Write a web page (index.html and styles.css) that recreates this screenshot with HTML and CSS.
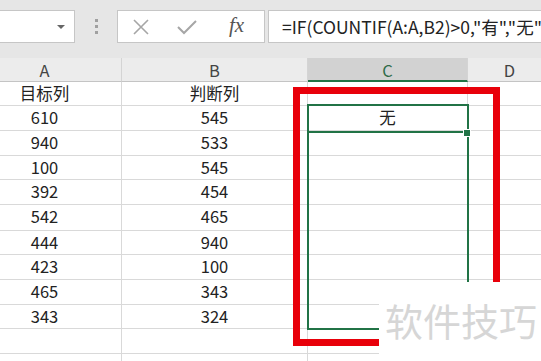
FILE: index.html
```html
<!DOCTYPE html>
<html>

<head>
    <title>COUNTIF</title>
    <link rel="stylesheet" href="styles.css">
</head>

<body>
    <div class="toolbar">
        <div class="name-box">
            <span class="arrow"></span>
        </div>
        <div class="grip">
            <span></span><span></span><span></span>
        </div>
        <div class="fx-box">
            <svg class="icon" width="18" height="18" viewBox="0 0 18 18">
                <path d="M2 2 L16 16 M16 2 L2 16" stroke="#a6a6a6" stroke-width="1.6" fill="none" />
            </svg>
            <svg class="icon" width="22" height="18" viewBox="0 0 22 18">
                <path d="M2 9 L8 15 L20 3" stroke="#a6a6a6" stroke-width="2" fill="none" />
            </svg>
            <span class="fx">fx</span>
        </div>
        <div class="formula">=IF(COUNTIF(A:A,B2)&gt;0,"有","无"</div>
    </div>

    <div class="sheet">
        <div class="grid">
            <div class="head">A</div>
            <div class="head">B</div>
            <div class="head selected">C</div>
            <div class="head">D</div>

            <div class="cell">目标列</div><div class="cell">判断列</div><div class="cell"></div><div class="cell"></div>
            <div class="cell">610</div><div class="cell">545</div><div class="cell">无</div><div class="cell"></div>
            <div class="cell">940</div><div class="cell">533</div><div class="cell"></div><div class="cell"></div>
            <div class="cell">100</div><div class="cell">545</div><div class="cell"></div><div class="cell"></div>
            <div class="cell">392</div><div class="cell">454</div><div class="cell"></div><div class="cell"></div>
            <div class="cell">542</div><div class="cell">465</div><div class="cell"></div><div class="cell"></div>
            <div class="cell">444</div><div class="cell">940</div><div class="cell"></div><div class="cell"></div>
            <div class="cell">423</div><div class="cell">100</div><div class="cell"></div><div class="cell"></div>
            <div class="cell">465</div><div class="cell">343</div><div class="cell"></div><div class="cell"></div>
            <div class="cell">343</div><div class="cell">324</div><div class="cell"></div><div class="cell"></div>
            <div class="cell"></div><div class="cell"></div><div class="cell"></div><div class="cell"></div>
            <div class="cell"></div><div class="cell"></div><div class="cell"></div><div class="cell"></div>
        </div>

        <!-- overlays on top of the grid -->
        <div class="red-box"></div>
        <div class="selection">
            <div class="active"></div>
            <span class="handle"></span>
        </div>
        <div class="watermark">软件技巧</div>
    </div>
</body>

</html>
```

FILE: styles.css
```css
body {
    margin: 0;
    padding: 0;
    width: 541px;
    height: 361px;
    overflow: hidden;
    background-color: #fff;
    font-family: "Noto Sans CJK SC", "Noto Sans", sans-serif;
    color: #222;
}

.toolbar {
    display: flex;
    align-items: flex-start;
    height: 58px;
    padding-top: 10px;
    box-sizing: border-box;
    background-color: #e6e6e6;
}

.name-box {
    width: 75px;
    height: 33px;
    box-sizing: border-box;
    background-color: #fff;
    border: 1px solid #c6c6c6;
    border-left: none;
    position: relative;
}

.name-box .arrow {
    position: absolute;
    right: 9px;
    top: 14px;
    border-left: 4px solid transparent;
    border-right: 4px solid transparent;
    border-top: 4px solid #666;
}

.grip {
    display: flex;
    flex-direction: column;
    gap: 3px;
    width: 42px;
    align-items: center;
    padding-top: 9px;
}

.grip span {
    width: 3px;
    height: 3px;
    background-color: #a0a0a0;
}

.fx-box {
    display: flex;
    align-items: center;
    width: 148px;
    height: 33px;
    box-sizing: border-box;
    background-color: #fff;
    border: 1px solid #c6c6c6;
    padding-left: 14px;
    gap: 26px;
}

.fx {
    font-family: "Liberation Serif", serif;
    font-style: italic;
    font-size: 21px;
    color: #555;
    margin-top: -3px;
    margin-left: 5px;
}

.formula {
    flex: 1;
    height: 33px;
    box-sizing: border-box;
    margin-left: 3px;
    background-color: #fff;
    border: 1px solid #c6c6c6;
    border-right: none;
    padding-left: 13px;
    font-size: 17.5px;
    line-height: 31px;
    white-space: nowrap;
    overflow: hidden;
    color: #222;
}

.sheet {
    position: relative;
    height: 303px;
    overflow: hidden;
}

.grid {
    display: grid;
    grid-template-columns: 154px 186px 160px 84px;
    grid-template-rows: 24px 24px 25px 25px 24px 25px 26px 24px 25px 25px 24px 25px 25px;
    margin-left: -32px;
    font-size: 16.5px;
}

.head {
    background-color: #ececec;
    border-right: 1px solid #d4d4d4;
    border-bottom: 1px solid #c4c4c4;
    text-align: center;
    line-height: 24px;
    color: #444;
}

.head.selected {
    background-color: #d2d2d2;
    color: #2f6b48;
    border-bottom: 2px solid #217346;
}

.cell {
    border-right: 1px solid #d9d9d9;
    border-bottom: 1px solid #d9d9d9;
    text-align: center;
    line-height: 23px;
    color: #222;
}

.red-box {
    position: absolute;
    left: 293px;
    top: 29px;
    width: 207px;
    height: 259px;
    box-sizing: border-box;
    border: 7px solid #e8000a;
}

.selection {
    position: absolute;
    left: 307px;
    top: 46px;
    width: 162px;
    height: 226px;
    box-sizing: border-box;
    border: 2px solid #217346;
}

.selection .active {
    height: 25px;
    border-bottom: 2px solid #217346;
    margin-right: 2px;
}

.selection .handle {
    position: absolute;
    right: -4px;
    top: 23px;
    width: 6px;
    height: 6px;
    background-color: #217346;
    border: 1px solid #fff;
}

.watermark {
    position: absolute;
    left: 379px;
    top: 224px;
    right: 0;
    bottom: 0;
    background-color: #fff;
    color: #d6d6d6;
    font-size: 38px;
    line-height: 1;
    padding-left: 6px;
    padding-top: 19px;
    white-space: nowrap;
}
```
